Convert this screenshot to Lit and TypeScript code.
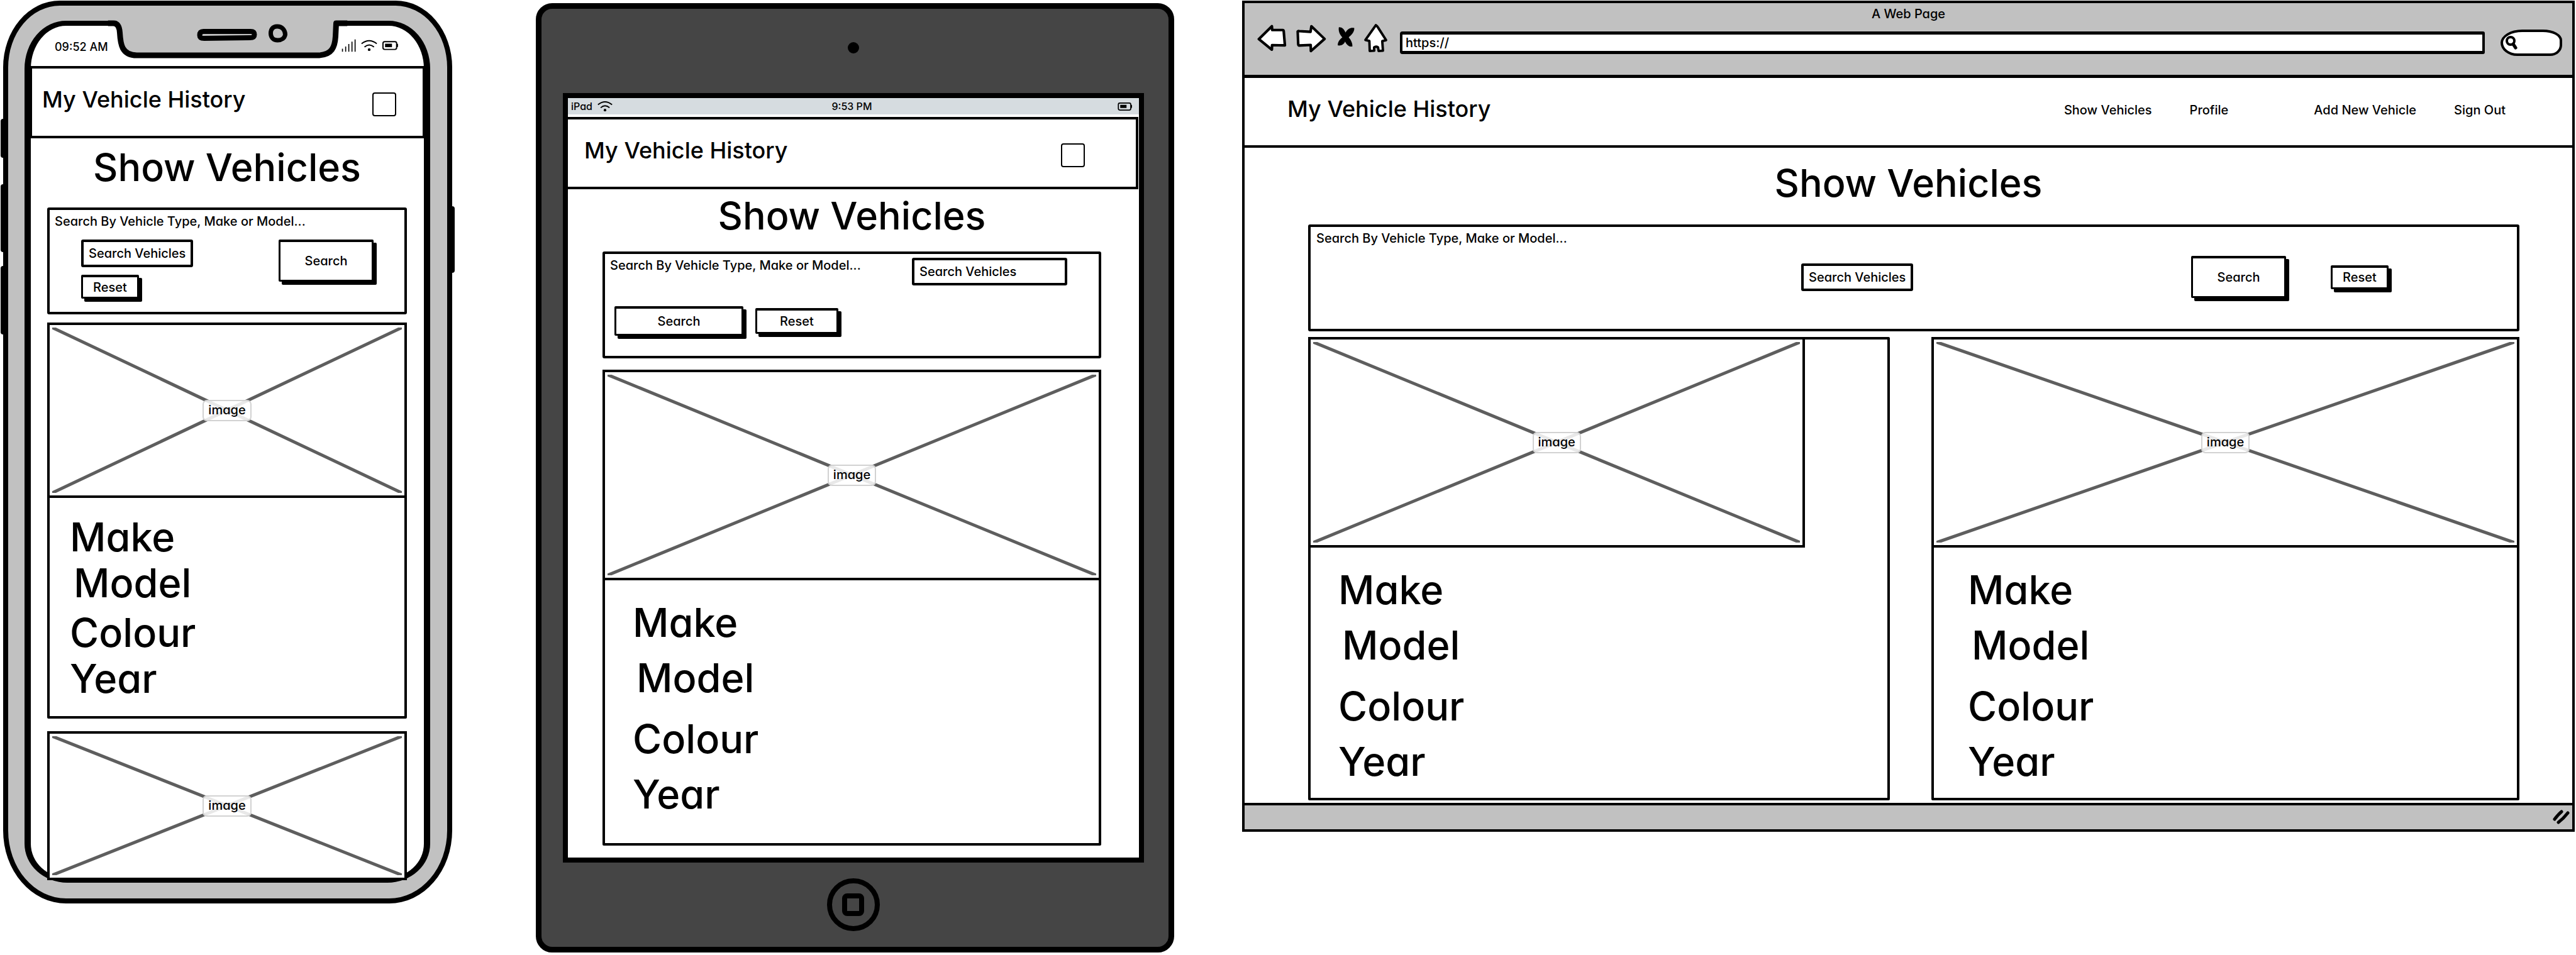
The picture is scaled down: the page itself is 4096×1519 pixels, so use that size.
import { LitElement, html, css, svg } from "lit";
import { customElement, property } from "lit/decorators.js";

const base = css`
  * {
    box-sizing: border-box;
  }
  :host {
    display: block;
    color: #000;
    font-family: Inter, "Noto Sans", sans-serif;
    font-feature-settings: "cv11";
    font-weight: 500;
    font-size: 20px;
    line-height: 24px;
  }
  svg {
    display: block;
    flex: none;
  }
`;

const controls = css`
  button,
  input {
    font: inherit;
    font-feature-settings: inherit;
    color: inherit;
    margin: 0;
    padding: 0;
  }
  .field {
    height: 44px;
    width: 178px;
    padding: 0 8px;
    border: 4px solid #000;
    border-radius: 3px;
    background: #fff;
  }
  .btn {
    border: 3px solid #000;
    border-top-width: 4px;
    border-radius: 2px;
    background: #fff;
    box-shadow: 5px 5px 0 #000;
  }
  .search {
    width: 151px;
    height: 67px;
  }
  .reset {
    width: 92px;
    height: 38px;
  }
`;

const wifiIcon = svg`
  <path d="M223 101 Q267 66 311 101" fill="none" stroke="#000" stroke-width="7" />
  <path d="M240 120 Q267 96 295 120" fill="none" stroke="#000" stroke-width="7" />
  <circle cx="267" cy="135" r="8" />`;

const batteryIcon = svg`
  <rect x="345" y="89" width="79" height="45" rx="10" fill="none" stroke="#000" stroke-width="7" />
  <rect x="357" y="101" width="40" height="20" />
  <rect x="424" y="101" width="8" height="20" rx="4" />`;

@customElement("image-box")
export class ImageBox extends LitElement {
  static styles = [
    base,
    css`
      :host {
        position: relative;
        border: 4px solid #000;
        background: #fff;
      }
      .cross {
        position: absolute;
        inset: 4px;
        width: calc(100% - 8px);
        height: calc(100% - 8px);
      }
      .holder {
        position: relative;
        height: 100%;
        display: flex;
        align-items: center;
        justify-content: center;
      }
      .tag {
        padding: 2px 7px 4px;
        border: 2px solid #d2d2d2;
        border-radius: 7px;
        background: rgba(255, 255, 255, 0.86);
      }
    `,
  ];

  render() {
    return html`
      <svg class="cross" viewBox="0 0 100 100" preserveAspectRatio="none" aria-hidden="true">
        <path
          d="M0 0 L100 100 M100 0 L0 100"
          fill="none"
          stroke="#5e5e5e"
          stroke-width="5"
          vector-effect="non-scaling-stroke"
        />
      </svg>
      <div class="holder"><span class="tag">image</span></div>
    `;
  }
}

@customElement("vehicle-card")
export class VehicleCard extends LitElement {
  static styles = [
    base,
    css`
      :host {
        --row: 88px;
        --row-gap: 9px;
        --image-height: 335px;
        --image-width: calc(100% + 8px);
        --specs: 23px 0 14px 44px;
        border: 4px solid #000;
        border-radius: 2px;
        background: #fff;
      }
      .picture {
        height: var(--image-height);
        width: var(--image-width);
        margin: -4px -4px 0;
      }
      .specs {
        list-style: none;
        margin: 0;
        padding: var(--specs);
        font-size: 63px;
        line-height: var(--row);
      }
      .model {
        padding-left: 6px;
        margin-bottom: var(--row-gap);
      }
    `,
  ];

  render() {
    return html`
      <image-box class="picture"></image-box>
      <ul class="specs">
        <li>Make</li>
        <li class="model">Model</li>
        <li>Colour</li>
        <li>Year</li>
      </ul>
    `;
  }
}

@customElement("site-nav")
export class SiteNav extends LitElement {
  @property({ type: Boolean }) wide = false;

  static styles = [
    base,
    css`
      :host {
        --start: 16px;
        --end: 42px;
        border: 4px solid #000;
        background: #fff;
      }
      :host([wide]) {
        border-width: 0 0 4px;
      }
      .bar {
        display: flex;
        justify-content: space-between;
        align-items: flex-start;
        height: 107px;
        padding: 27px var(--end) 0 var(--start);
      }
      .brand {
        font-size: 36px;
        line-height: 44px;
        white-space: nowrap;
      }
      .menu {
        appearance: none;
        width: 38px;
        height: 38px;
        margin: 11px 0 0;
        border: 2px solid #000;
        border-radius: 4px;
        background: #fff;
      }
      .links,
      .group {
        display: flex;
        gap: 60px;
        white-space: nowrap;
      }
      .links {
        gap: 136px;
        padding-top: 12px;
      }
      a {
        color: inherit;
        text-decoration: none;
      }
    `,
  ];

  render() {
    return html`
      <div class="bar">
        <span class="brand">My Vehicle History</span>
        ${this.wide
          ? html`<nav class="links">
              <span class="group"><a href="#vehicles">Show Vehicles</a><a href="#profile">Profile</a></span>
              <span class="group"><a href="#add">Add New Vehicle</a><a href="#out">Sign Out</a></span>
            </nav>`
          : html`<input class="menu" type="checkbox" aria-label="Menu" />`}
      </div>
    `;
  }
}

@customElement("phone-view")
export class PhoneView extends LitElement {
  static styles = [
    base,
    controls,
    css`
      :host {
        position: relative;
        border: 8px solid #000;
        border-radius: 90px 90px 100px 100px / 106px 106px 116px 116px;
        background: #c1c1c1;
        padding: 24px 27px 25px 26px;
      }
      .side {
        position: absolute;
        left: -12px;
        width: 8px;
        border-radius: 4px;
        background: #000;
      }
      .mute {
        top: 180px;
        height: 62px;
      }
      .up {
        top: 284px;
        height: 108px;
      }
      .down {
        top: 414px;
        height: 109px;
      }
      .power {
        top: 319px;
        left: auto;
        right: -12px;
        height: 106px;
      }
      .screen {
        position: relative;
        border: 8px solid #000;
        border-width: 8px 10px;
        border-radius: 66px 66px 68px 68px / 76px 76px 62px 62px;
        background: #fff;
      }
      .notch {
        position: absolute;
        top: -12px;
        left: 50%;
        transform: translateX(-50%);
      }
      .status {
        display: flex;
        justify-content: space-between;
        align-items: flex-start;
        height: 64px;
        padding: 20px 40px 0 38px;
        font-size: 18px;
      }
      .clock {
        padding-top: 2px;
      }
      .icons {
        display: flex;
        gap: 7px;
      }
      .nav {
        margin: 0 -2px;
      }
      .main {
        padding: 0 27px 0 26px;
      }
      h1 {
        margin: 6px 0 24px;
        font-size: 61px;
        line-height: 80px;
        font-weight: 500;
        text-align: center;
        white-space: nowrap;
      }
      .panel {
        height: 170px;
        padding: 6px 0 0;
        border: 4px solid #000;
        border-radius: 3px;
      }
      .panel label {
        display: block;
        padding-left: 8px;
      }
      .tools {
        display: flex;
        justify-content: space-between;
        align-items: flex-start;
        padding: 17px 49px 0 50px;
      }
      .stack {
        display: flex;
        flex-direction: column;
        gap: 12px;
      }
      .card {
        --row: 73px;
        --row-gap: 6px;
        --image-height: 279px;
        --specs: 26px 0 23px 32px;
        margin-top: 13px;
      }
      .next {
        height: 237px;
        margin: 20px 0 -4px;
      }
    `,
  ];

  render() {
    return html`
      <span class="side mute"></span><span class="side up"></span><span class="side down"></span
      ><span class="side power"></span>
      <div class="screen">
        <div class="status">
          <span class="clock">09:52 AM</span>
          <span class="icons">
            <svg width="24" height="22" viewBox="105 70 87 80" aria-hidden="true">
              <path
                d="M110.500 130V147M129 117V147M147 103V147M165.500 89V147M183.500 76V147"
                stroke="#000"
                stroke-width="6"
              />
            </svg>
            <svg width="26" height="22" viewBox="220 70 94 80" aria-hidden="true">${wifiIcon}</svg>
            <svg width="27" height="22" viewBox="338 70 98 80" aria-hidden="true">${batteryIcon}</svg>
          </span>
        </div>
        <site-nav class="nav"></site-nav>
        <div class="main">
          <h1>Show Vehicles</h1>
          <form class="panel" @submit=${(e: Event) => e.preventDefault()}>
            <label for="q">Search By Vehicle Type, Make or Model...</label>
            <div class="tools">
              <div class="stack">
                <input class="field" id="q" type="text" value="Search Vehicles" />
                <button class="btn reset" type="button">Reset</button>
              </div>
              <button class="btn search" type="submit">Search</button>
            </div>
          </form>
          <vehicle-card class="card"></vehicle-card>
          <image-box class="next"></image-box>
        </div>
        <svg class="notch" width="381" height="66" viewBox="171 29 381 66" aria-hidden="true">
          <path d="M184 32 Q190 40 190 52 C191 70 193 88 217 88 H504 C528 88 532 74 533 58 V32 Z" fill="#c1c1c1" />
          <path
            d="M171 37 H180 Q189 37 190 52 C191 70 193 88 217 88 H504 C528 88 532 74 533 58 L534 37 H552"
            fill="none"
            stroke="#000"
            stroke-width="9"
            stroke-linejoin="round"
          />
          <path
            d="M323 50 H398 Q404 50 404 55 Q404 60 397 60 L324 61 Q317 61 317 56 Q317 50 323 50 Z"
            fill="none"
            stroke="#000"
            stroke-width="8"
          />
          <path
            d="M440 42 C449 42 453 49 453 55 C452 61 447 64 441 64 C434 64 430 59 430 53 C430 47 433 42 440 42 Z"
            fill="none"
            stroke="#000"
            stroke-width="7"
          />
        </svg>
      </div>
    `;
  }
}

@customElement("tablet-view")
export class TabletView extends LitElement {
  static styles = [
    base,
    controls,
    css`
      :host {
        border: 9px solid #000;
        border-radius: 26px;
        background: #454545;
        padding: 0 39px 0 34px;
      }
      .top,
      .bottom {
        display: flex;
        justify-content: center;
        height: 134px;
      }
      .camera {
        width: 18px;
        height: 18px;
        margin-top: 53px;
        border-radius: 50%;
        background: #000;
      }
      .bottom {
        align-items: center;
      }
      .home {
        border: 0;
        padding: 0;
        background: none;
      }
      .screen {
        border: 8px solid #000;
        background: #fff;
      }
      .status {
        display: grid;
        grid-template-columns: 1fr auto 1fr;
        align-items: center;
        height: 26px;
        margin-bottom: 4px;
        padding: 0 10px 0 5px;
        background: #d6dce0;
        font-size: 16px;
      }
      .carrier {
        display: flex;
        align-items: center;
        gap: 8px;
      }
      .battery {
        justify-self: end;
      }
      .nav {
        --start: 26px;
        --end: 81px;
        margin: 0 1px 0 -4px;
      }
      .main {
        padding: 0 60px 19px 55px;
      }
      h1 {
        margin: 2px 0 17px;
        font-size: 61px;
        line-height: 80px;
        font-weight: 500;
        text-align: center;
      }
      .panel {
        height: 170px;
        border: 4px solid #000;
        border-radius: 3px;
      }
      .line {
        display: flex;
        justify-content: space-between;
        align-items: flex-start;
        padding: 6px 50px 0 8px;
      }
      .line .field {
        width: 247px;
      }
      .actions {
        display: flex;
        align-items: center;
        gap: 19px;
        padding: 33px 0 0 15px;
      }
      .actions .search {
        width: 205px;
        height: 47px;
      }
      .actions .reset {
        width: 132px;
        height: 41px;
      }
      .card {
        --specs: 23px 0 34px 44px;
        margin-top: 18px;
      }
    `,
  ];

  render() {
    return html`
      <div class="top"><span class="camera"></span></div>
      <div class="screen">
        <div class="status">
          <span class="carrier"
            >iPad
            <svg width="24" height="20" viewBox="220 72 94 78" aria-hidden="true">${wifiIcon}</svg></span
          >
          <span>9:53 PM</span>
          <svg class="battery" width="24" height="20" viewBox="340 70 96 80" aria-hidden="true">${batteryIcon}</svg>
        </div>
        <site-nav class="nav"></site-nav>
        <div class="main">
          <h1>Show Vehicles</h1>
          <form class="panel" @submit=${(e: Event) => e.preventDefault()}>
            <div class="line">
              <label for="q">Search By Vehicle Type, Make or Model...</label>
              <input class="field" id="q" type="text" value="Search Vehicles" />
            </div>
            <div class="actions">
              <button class="btn search" type="submit">Search</button>
              <button class="btn reset" type="button">Reset</button>
            </div>
          </form>
          <vehicle-card class="card"></vehicle-card>
        </div>
      </div>
      <div class="bottom">
        <button class="home" type="button" aria-label="Home">
          <svg width="86" height="86" viewBox="0 0 86 86" aria-hidden="true">
            <circle cx="43" cy="43" r="38" fill="none" stroke="#000" stroke-width="8" />
            <rect x="29" y="29" width="27" height="28" rx="4" fill="none" stroke="#000" stroke-width="8" />
          </svg>
        </button>
      </div>
    `;
  }
}

@customElement("browser-view")
export class BrowserView extends LitElement {
  static styles = [
    base,
    controls,
    css`
      :host {
        border: 4px solid #000;
        background: #fff;
      }
      .chrome {
        padding-top: 5px;
        border-bottom: 5px solid #000;
        background: #c1c1c1;
      }
      .title {
        text-align: center;
      }
      .toolbar {
        display: flex;
        align-items: flex-start;
        height: 85px;
        padding: 0 16px 0 19px;
      }
      .keys {
        display: flex;
        gap: 12px;
        padding-top: 3px;
        margin-right: 18px;
      }
      .key {
        border: 0;
        background: none;
      }
      .address {
        flex: 1;
        min-width: 0;
        height: 36px;
        margin: 16px 25px 0 0;
        padding: 0 5px;
        border: 5px solid #000;
        border-width: 5px 4px;
        border-radius: 4px 3px 3px 4px;
        background: #fff;
      }
      .find {
        display: flex;
        align-items: center;
        width: 98px;
        height: 42px;
        margin-top: 13px;
        padding: 0 10px 0 3px;
        border: 4px solid #000;
        border-radius: 36px 32px 20px 28px / 22px 18px 18px 22px;
        background: #fff;
      }
      .find input {
        min-width: 0;
        width: 100%;
        border: 0;
        background: none;
      }
      .nav {
        --start: 68px;
        --end: 106px;
      }
      h1 {
        margin: 16px 0 26px;
        font-size: 61px;
        line-height: 80px;
        font-weight: 500;
        text-align: center;
      }
      .main {
        padding: 0 84px 4px 101px;
      }
      .panel {
        height: 170px;
        padding-top: 6px;
        border: 4px solid #000;
        border-radius: 3px;
      }
      .panel label {
        display: block;
        padding-left: 9px;
      }
      .tools {
        display: grid;
        grid-template-columns: 780fr 178px 442fr 151px 71fr 92px 204fr;
        align-items: center;
        padding-top: 16px;
      }
      .field {
        grid-column: 2;
      }
      .search {
        grid-column: 4;
      }
      .reset {
        grid-column: 6;
      }
      .cards {
        display: grid;
        grid-template-columns: 925fr 935fr;
        gap: 66px;
        padding-top: 9px;
      }
      .first {
        --image-width: 86.2%;
      }
      .second {
        --specs: 23px 0 14px 54px;
      }
      .foot {
        display: flex;
        justify-content: flex-end;
        align-items: center;
        height: 42px;
        padding: 0 3px 0 0;
        border-top: 4px solid #000;
        background: #c1c1c1;
      }
    `,
  ];

  render() {
    return html`
      <header class="chrome">
        <div class="title">A Web Page</div>
        <div class="toolbar">
          <div class="keys">
            <button class="key" type="button" aria-label="Back">
              <svg width="49" height="47" viewBox="30 75 177 170" aria-hidden="true">
                <path
                  d="M43 166 L118 92 L120 114 L180 114 Q185 114 186 120 L193 202 L119 201 L118 227 Z"
                  fill="#fff"
                  stroke="#000"
                  stroke-width="15"
                  stroke-linejoin="round"
                />
              </svg>
            </button>
            <button class="key" type="button" aria-label="Forward">
              <svg width="51" height="47" viewBox="250 75 185 170" aria-hidden="true">
                <path
                  d="M266 122 Q268 119 275 120 L340 124 L345 92 L421 165 L342 235 L341 200 L275 203 Q270 203 269 196 Z"
                  fill="#fff"
                  stroke="#000"
                  stroke-width="15"
                  stroke-linejoin="round"
                />
              </svg>
            </button>
            <button class="key" type="button" aria-label="Stop">
              <svg width="33" height="47" viewBox="485 75 120 170" aria-hidden="true">
                <path
                  d="M510 97 C528 96 540 108 549 128 C562 104 580 98 599 102 C601 124 584 142 567 155 C582 174 590 192 588 209 C566 212 553 196 546 180 C540 196 524 206 504 203 C502 184 514 168 530 156 C514 138 506 118 510 97 Z"
                />
              </svg>
            </button>
            <button class="key" type="button" aria-label="Home">
              <svg width="41" height="47" viewBox="646 75 147 170" aria-hidden="true">
                <path
                  d="M720 86 Q728 90 733 100 L779 172 L757 178 L761 233 L736 234 L733 214 Q721 206 710 214 L711 233 L685 234 L683 177 L660 171 Z"
                  fill="#fff"
                  stroke="#000"
                  stroke-width="14"
                  stroke-linejoin="round"
                />
              </svg>
            </button>
          </div>
          <input class="address" type="text" aria-label="Address" value="https://" />
          <label class="find">
            <svg width="20" height="24" viewBox="0 0 20 24" aria-hidden="true">
              <circle cx="9" cy="9" r="6" fill="none" stroke="#000" stroke-width="4" />
              <path d="M13 14 L17 20" stroke="#000" stroke-width="5" stroke-linecap="round" />
            </svg>
            <input type="text" aria-label="Find" />
          </label>
        </div>
      </header>
      <site-nav class="nav" wide></site-nav>
      <h1>Show Vehicles</h1>
      <div class="main">
        <form class="panel" @submit=${(e: Event) => e.preventDefault()}>
          <label for="q">Search By Vehicle Type, Make or Model...</label>
          <div class="tools">
            <input class="field" id="q" type="text" value="Search Vehicles" />
            <button class="btn search" type="submit">Search</button>
            <button class="btn reset" type="button">Reset</button>
          </div>
        </form>
        <div class="cards">
          <vehicle-card class="first"></vehicle-card>
          <vehicle-card class="second"></vehicle-card>
        </div>
      </div>
      <footer class="foot">
        <svg width="28" height="24" viewBox="0 0 28 24" aria-hidden="true">
          <path
            d="M3 15 Q8 8 14 3 M9 20 Q17 14 24 5"
            fill="none"
            stroke="#000"
            stroke-width="5"
            stroke-linecap="round"
          />
        </svg>
      </footer>
    `;
  }
}

@customElement("app-root")
export class AppRoot extends LitElement {
  static styles = [
    base,
    css`
      :host {
        background: #fff;
      }
      .board {
        display: grid;
        grid-template-columns: minmax(0, 739fr) minmax(0, 1015fr) minmax(0, 2119fr);
        align-items: start;
        gap: 108px;
        padding: 1px 2px 0 5px;
      }
      .phone {
        margin-right: 25px;
      }
      .tablet {
        margin-top: 4px;
      }
    `,
  ];

  render() {
    return html`
      <main class="board">
        <phone-view class="phone"></phone-view>
        <tablet-view class="tablet"></tablet-view>
        <browser-view class="desktop"></browser-view>
      </main>
    `;
  }
}
